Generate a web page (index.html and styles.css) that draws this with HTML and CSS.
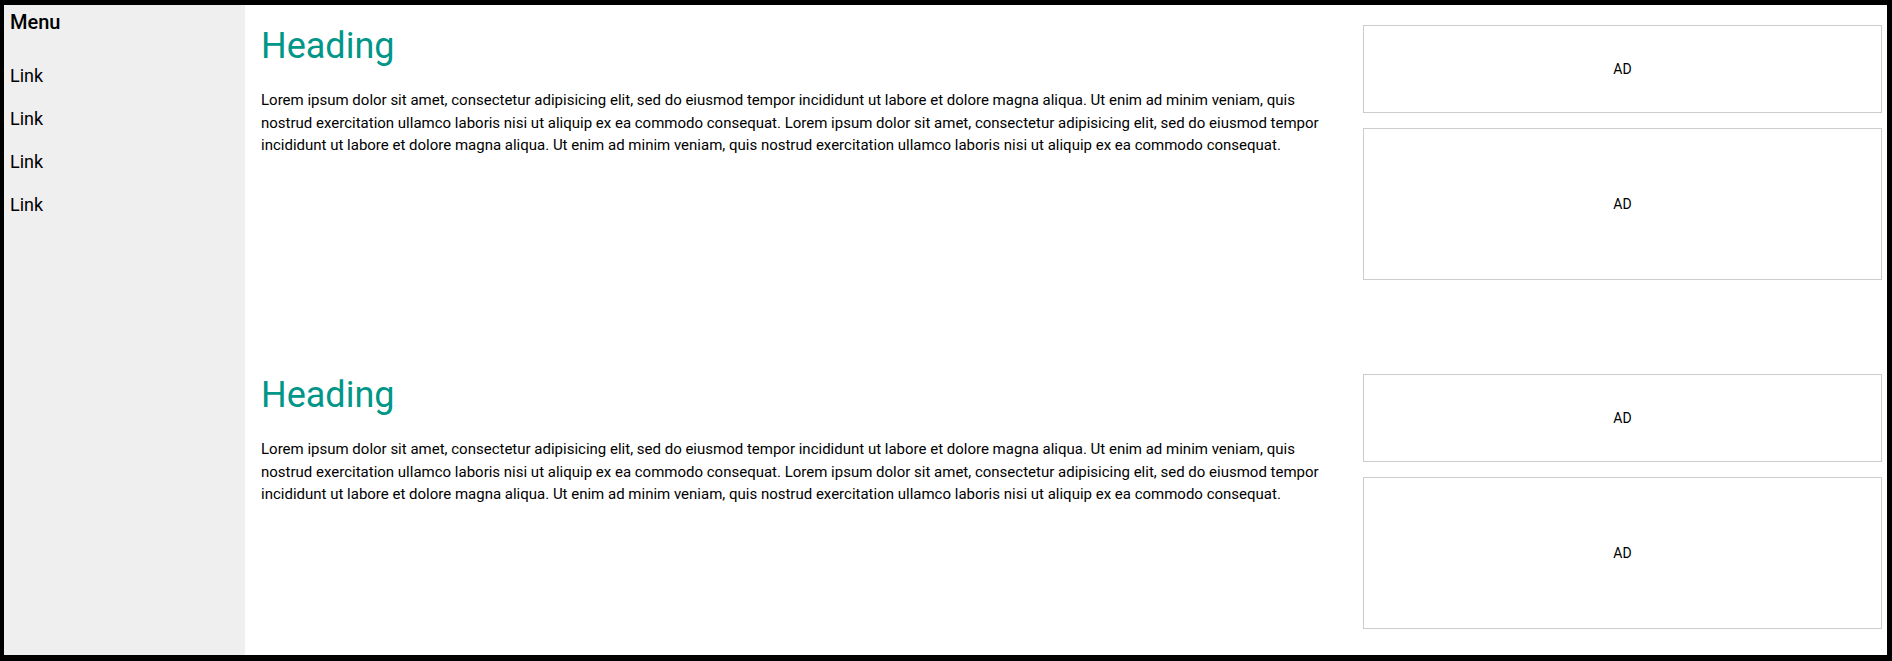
FILE: index.html
```html
<!DOCTYPE html>
<html lang="en">
<head>
<meta charset="utf-8">
<title>Layout</title>
<link rel="stylesheet" href="styles.css">
</head>
<body>
<div class="frame">
  <nav class="sidebar">
    <div class="menu-title">Menu</div>
    <a class="link" href="#">Link</a>
    <a class="link" href="#">Link</a>
    <a class="link" href="#">Link</a>
    <a class="link" href="#">Link</a>
  </nav>
  <main class="main">
    <section class="section">
      <article class="article">
        <h1 class="heading">Heading</h1>
        <p class="text">Lorem ipsum dolor sit amet, consectetur adipisicing elit, sed do eiusmod tempor incididunt ut labore et dolore magna aliqua. Ut enim ad minim veniam, quis nostrud exercitation ullamco laboris nisi ut aliquip ex ea commodo consequat. Lorem ipsum dolor sit amet, consectetur adipisicing elit, sed do eiusmod tempor incididunt ut labore et dolore magna aliqua. Ut enim ad minim veniam, quis nostrud exercitation ullamco laboris nisi ut aliquip ex ea commodo consequat.</p>
      </article>
      <aside class="ads">
        <div class="ad ad-small">AD</div>
        <div class="ad ad-large">AD</div>
      </aside>
    </section>
    <section class="section">
      <article class="article">
        <h1 class="heading">Heading</h1>
        <p class="text">Lorem ipsum dolor sit amet, consectetur adipisicing elit, sed do eiusmod tempor incididunt ut labore et dolore magna aliqua. Ut enim ad minim veniam, quis nostrud exercitation ullamco laboris nisi ut aliquip ex ea commodo consequat. Lorem ipsum dolor sit amet, consectetur adipisicing elit, sed do eiusmod tempor incididunt ut labore et dolore magna aliqua. Ut enim ad minim veniam, quis nostrud exercitation ullamco laboris nisi ut aliquip ex ea commodo consequat.</p>
      </article>
      <aside class="ads">
        <div class="ad ad-small">AD</div>
        <div class="ad ad-large">AD</div>
      </aside>
    </section>
  </main>
</div>
</body>
</html>
```
FILE: styles.css
```css
* {
  box-sizing: border-box;
}

html, body {
  margin: 0;
  padding: 0;
  background: #ffffff;
}

body {
  font-family: Roboto, "Liberation Sans", Arial, sans-serif;
  color: #000000;
}

.frame {
  display: flex;
  height: 661px;
  border-style: solid;
  border-color: #000000;
  border-width: 5px 5px 6px 4px;
  overflow: hidden;
  background: #ffffff;
}

.sidebar {
  flex: 0 0 241px;
  background: #efefef;
  padding: 6px 6px;
  display: flex;
  flex-direction: column;
}

.menu-title {
  font-size: 20px;
  font-weight: 500;
  line-height: 23px;
  margin-bottom: 20px;
}

.link {
  display: block;
  font-size: 18px;
  line-height: 21px;
  padding: 11px 0;
  color: #000000;
  text-decoration: none;
}

.main {
  flex: 1 1 auto;
  overflow: hidden;
  display: flex;
  flex-direction: column;
}

.section {
  flex: 0 0 349px;
  display: flex;
  padding: 20px 5px 0 0;
}

.article {
  flex: 1 1 auto;
  padding: 0 28px 0 16px;
}

.heading {
  margin: 0 0 22px;
  font-size: 36px;
  font-weight: 400;
  line-height: 42px;
  color: #009688;
}

.text {
  margin: 0;
  font-size: 15px;
  line-height: 22.5px;
}

.ads {
  flex: 0 0 519px;
  display: flex;
  flex-direction: column;
  gap: 15px;
}

.ad {
  border: 1px solid #cccccc;
  display: flex;
  align-items: center;
  justify-content: center;
  font-size: 14px;
}

.ad-small {
  height: 88px;
}

.ad-large {
  height: 152px;
}
```
